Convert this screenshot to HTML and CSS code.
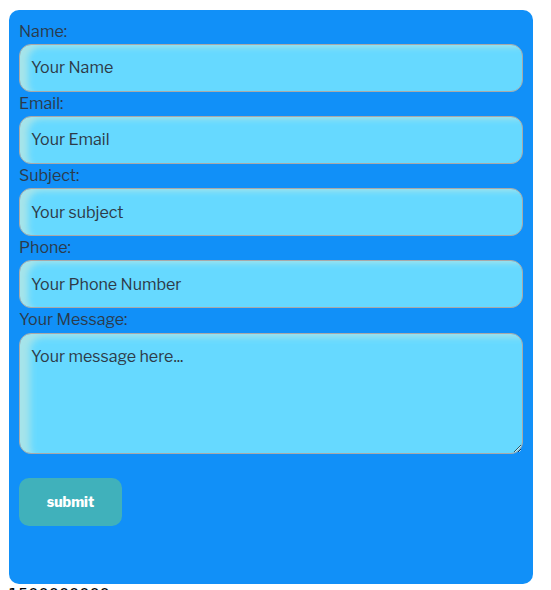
FILE: index.html
```html
<!DOCTYPE html>
<html>
<head>
<meta charset="utf-8">
<link rel="stylesheet" href="styles.css">
</head>
<body>
<form class="contact">
  <label class="lbl" for="name">Name:</label>
  <input class="field" id="name" type="text" placeholder="Your Name">
  <label class="lbl" for="email">Email:</label>
  <input class="field" id="email" type="text" placeholder="Your Email">
  <label class="lbl" for="subject">Subject:</label>
  <input class="field" id="subject" type="text" placeholder="Your subject">
  <label class="lbl" for="phone">Phone:</label>
  <input class="field" id="phone" type="text" placeholder="Your Phone Number">
  <label class="lbl" for="msg">Your Message:</label>
  <textarea class="field area" id="msg" placeholder="Your message here..."></textarea>
  <button class="submit" type="button">submit</button>
</form>
<div class="phone">1500000000</div>
</body>
</html>
```

FILE: styles.css
```css
body {
  margin: 8px;
  font-family: "Libre Franklin", "Liberation Sans", Arial, sans-serif;
  font-size: 16px;
  color: #000;
}
.contact {
  display: flex;
  flex-direction: column;
  align-items: flex-start;
  width: 524px;
  height: 574px;
  box-sizing: border-box;
  margin: 2px 0 0 1px;
  padding: 10px;
  background: #1190f8;
  border-radius: 10px;
}
.lbl {
  display: block;
  line-height: 24px;
  height: 24.25px;
  color: #2b3b4c;
  font-size: 16px;
}
.lbl:first-child {
  height: 23.6px;
}
.field {
  display: block;
  width: 504px;
  height: 48px;
  flex-shrink: 0;
  box-sizing: border-box;
  padding: 0 11px;
  border: 1px solid #a9a9a9;
  border-radius: 12px;
  background: #66d9ff;
  box-shadow: inset 10px 4px 6px -2px #a6e4ea;
  font-family: inherit;
  font-size: 16px;
  color: #333;
  outline: none;
}
.field::placeholder {
  color: #2e3b48;
  opacity: 1;
}
.area {
  height: 121px;
  padding: 13px 11px 10px;
  resize: vertical;
  box-shadow: inset 12px 5px 7px -2px #a6e4ea;
}
.submit {
  margin-top: 24px;
  width: 103px;
  height: 48px;
  flex-shrink: 0;
  border: none;
  border-radius: 10px;
  background: #40b1bb;
  color: #fff;
  font-family: "Libre Franklin", "Liberation Sans", Arial, sans-serif;
  font-weight: 800;
  font-size: 14px;
}
.phone {
  font-family: "DejaVu Sans", sans-serif;
  line-height: 20px;
  padding-top: 1px;
}
```
